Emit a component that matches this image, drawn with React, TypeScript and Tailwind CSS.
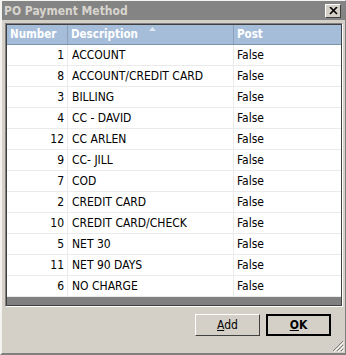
const rows: [number, string][] = [
  [1, "ACCOUNT"],
  [8, "ACCOUNT/CREDIT CARD"],
  [3, "BILLING"],
  [4, "CC - DAVID"],
  [12, "CC ARLEN"],
  [9, "CC- JILL"],
  [7, "COD"],
  [2, "CREDIT CARD"],
  [10, "CREDIT CARD/CHECK"],
  [5, "NET 30"],
  [11, "NET 90 DAYS"],
  [6, "NO CHARGE"],
];

export default function App() {
  return (
    <div
      className="w-[346px] h-[355px] bg-[#d4d0c8] border-l-2 border-t border-r border-b-2 border-l-[#f4f3ef] border-t-[#f4f3ef] border-r-[#808080] border-b-[#808080] flex flex-col text-[12px] text-black"
      style={{ fontFamily: "'DejaVu Sans Condensed', 'DejaVu Sans', sans-serif" }}
    >
      {/* title bar */}
      <div className="h-[19px] bg-[#848484] flex items-center justify-between pl-[2px] pr-[4px]">
        <span className="font-bold text-[#d8d5ce] text-[12px] leading-none">PO Payment Method</span>
        <button className="w-[16px] h-[14px] bg-[#d4d0c8] border border-t-white border-l-white border-r-[#404040] border-b-[#404040] flex items-center justify-center">
          <svg width="9" height="8" viewBox="0 0 9 8">
            <path d="M1 0 L8 7 M8 0 L1 7" stroke="#000" strokeWidth="1.6" />
          </svg>
        </button>
      </div>

      {/* grid */}
      <div className="ml-[3px] mr-[2px] mt-[3px] border border-t-[#808080] border-l-[#808080] border-r-white border-b-white">
        <div className="border border-[#404040] bg-white flex flex-col">
          <div className="h-[20px] bg-[#a6bdd9] flex text-white font-bold text-[11.5px] border-b border-[#7f93ad] relative">
            <div className="w-[61px] pl-[3px] flex items-center border-r border-[#8aa0bb]">Number</div>
            <div className="w-[166px] pl-[3px] flex items-center border-r border-[#8aa0bb]">Description</div>
            <div className="flex-1 pl-[3px] flex items-center">Post</div>
            <svg className="absolute left-[142px] top-[2px]" width="7" height="4" viewBox="0 0 7 4">
              <path d="M0 4 L3.5 0 L7 4 Z" fill="#dfe7f1" />
            </svg>
          </div>
          {rows.map(([n, d]) => (
            <div key={n} className="h-[21px] flex items-center border-b border-[#ebebeb]">
              <div className="w-[61px] h-full pr-[3px] flex items-center justify-end border-r border-[#ebebeb]">{n}</div>
              <div className="w-[166px] h-full pl-[4px] flex items-center border-r border-[#ebebeb]">{d}</div>
              <div className="flex-1 h-full pl-[3px] flex items-center">False</div>
            </div>
          ))}
          <div className="h-[8px] bg-[#808080]" />
        </div>
      </div>

      {/* buttons */}
      <div className="flex justify-end gap-[6px] mt-[7px] mr-[14px]">
        <button className="w-[65px] h-[22px] bg-[#d4d0c8] border border-t-white border-l-white border-r-[#404040] border-b-[#404040]">
          <span className="underline">A</span>dd
        </button>
        <button className="w-[65px] h-[22px] bg-[#d4d0c8] border-2 border-black font-bold">
          <span className="underline">O</span>K
        </button>
      </div>
      <div className="flex-1 flex items-end justify-end pr-[1px] pb-[1px]">
        <svg width="12" height="12" viewBox="0 0 12 12">
          <path d="M11 1 L1 11 M11 5 L5 11 M11 9 L9 11" stroke="#808080" strokeWidth="1" />
          <path d="M12 2 L2 12 M12 6 L6 12 M12 10 L10 12" stroke="#ffffff" strokeWidth="1" />
        </svg>
      </div>
    </div>
  );
}
